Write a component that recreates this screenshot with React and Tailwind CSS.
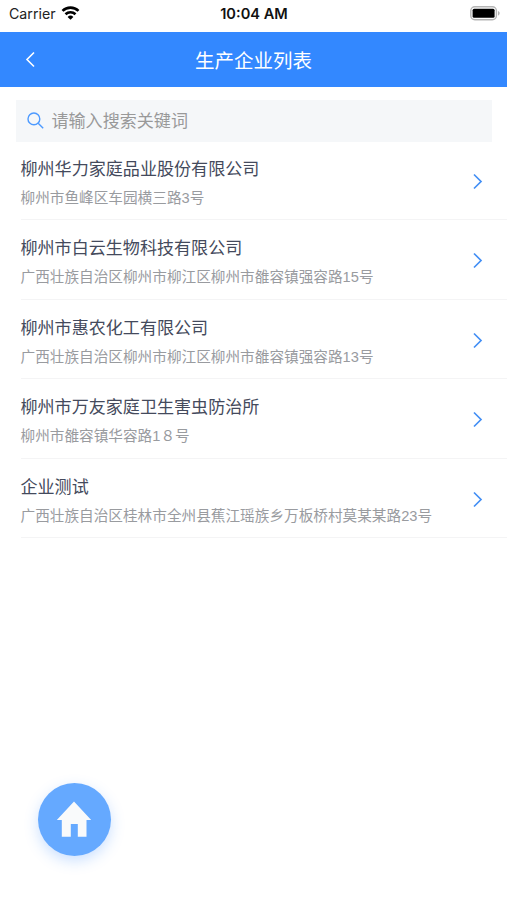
const companies = [
  { name: "柳州华力家庭品业股份有限公司", address: "柳州市鱼峰区车园横三路3号" },
  { name: "柳州市白云生物科技有限公司", address: "广西壮族自治区柳州市柳江区柳州市雒容镇强容路15号" },
  { name: "柳州市惠农化工有限公司", address: "广西壮族自治区柳州市柳江区柳州市雒容镇强容路13号" },
  { name: "柳州市万友家庭卫生害虫防治所", address: "柳州市雒容镇华容路1８号" },
  { name: "企业测试", address: "广西壮族自治区桂林市全州县蕉江瑶族乡万板桥村莫某某路23号" },
];

function StatusBar() {
  return (
    <div className="grid h-[31.5px] grid-cols-3 items-center pb-1 pl-[9px] pr-[7px] font-[Inter,sans-serif] text-[#111]">
      <div className="flex items-center gap-[6px]">
        <span className="text-[14.2px] text-[#222]">Carrier</span>
        <svg className="-ml-px mb-0.5" width="19" height="14" viewBox="0 0 18 14" fill="none" stroke="#000" strokeWidth="2.6">
          <path d="M1 4.9a11.4 11.4 0 0 1 16 0" />
          <path d="M4 8.2a7.2 7.2 0 0 1 10 0" />
          <path d="M9 13.7 6.1 10.9a4.2 4.2 0 0 1 5.8 0Z" fill="#000" stroke="none" />
        </svg>
      </div>
      <span className="pt-0.5 pr-px text-center text-[14.6px] font-semibold whitespace-nowrap">10:04 AM</span>
      <svg className="justify-self-end" width="30" height="15" viewBox="0 0 30 15">
        <rect x="0.8" y="0.8" width="25.6" height="13" rx="4" fill="#fff" stroke="#b5b5b5" strokeWidth="1.4" />
        <rect x="2.6" y="2.8" width="22" height="9" rx="1.5" fill="#000" />
        <path d="M28 5c2.2.8 2.2 3.8 0 4.6Z" fill="#b5b5b5" />
      </svg>
    </div>
  );
}

function CompanyRow({ name, address }) {
  return (
    <li className="ml-[20.5px] flex h-[79.5px] items-center justify-between border-b border-[#f4f4f5] pt-[3px] pr-[24px]">
      <div className="pt-[3.2px] whitespace-nowrap">
        <p className="text-[17.07px] leading-[26px] text-[#444a5c]">{name}</p>
        <p className="mt-[4px] text-[14.65px] leading-[22px] text-[#999b9f]">{address}</p>
      </div>
      <svg width="10" height="17" viewBox="0 0 10 17" fill="none" stroke="#438ff5" strokeWidth="1.7">
        <path d="m1 1.5 7 7-7 7" />
      </svg>
    </li>
  );
}

export default function App() {
  return (
    <div className="flex h-[900px] w-[507px] flex-col overflow-hidden bg-white font-['Liberation_Sans','Noto_Sans_CJK_SC',sans-serif]">
      <StatusBar />
      <header className="grid h-[55.5px] grid-cols-3 items-center bg-[#3388ff] text-white">
        <svg className="ml-[25px]" width="11" height="17" viewBox="0 0 11 17" fill="none" stroke="#fff" strokeWidth="1.6">
          <path d="m9 1.5-7 7 7 7" />
        </svg>
        <h1 className="pt-[5px] text-center text-[19.5px] font-normal whitespace-nowrap">生产企业列表</h1>
      </header>

      <div className="mx-[15.5px] mt-[13px] flex h-[41.5px] items-center gap-[7px] bg-[#f5f7f9] pl-[11px]">
        <svg width="18" height="18" viewBox="0 0 18 18" fill="none" stroke="#4d9aff" strokeWidth="1.4">
          <circle cx="6.9" cy="6.9" r="5.9" />
          <path d="m11.2 11.2 5 5" />
        </svg>
        <span className="pt-[3px] text-[17.07px] text-[#999]">请输入搜索关键词</span>
      </div>

      <ul className="-mt-px">
        {companies.map((c) => (
          <CompanyRow key={c.name} name={c.name} address={c.address} />
        ))}
      </ul>

      <button className="mt-auto mb-[44px] ml-[37.5px] flex size-[73.5px] shrink-0 items-center justify-center rounded-full bg-[#65a9ff] shadow-[0_5px_14px_rgba(51,136,255,0.25)]">
        <svg width="36" height="38" viewBox="0 0 36 38" fill="#f9fafb">
          <path d="M18 1.5 35.2 20H30.5V36.7H21.8V24H14.8V36.7H5.8V20H.8Z" />
        </svg>
      </button>
    </div>
  );
}
